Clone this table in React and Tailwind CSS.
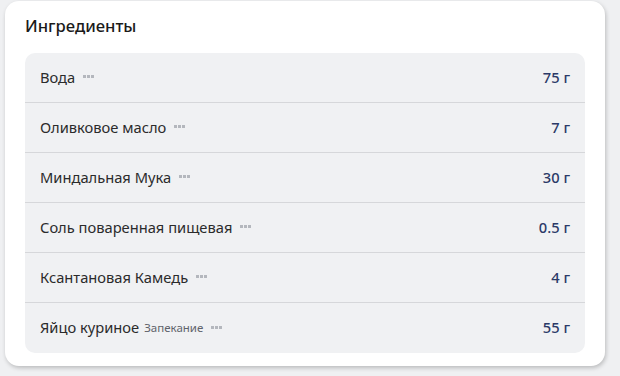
import React from "react";

const items = [
  { name: "Вода", value: "75 г" },
  { name: "Оливковое масло", value: "7 г" },
  { name: "Миндальная Мука", value: "30 г" },
  { name: "Соль поваренная пищевая", value: "0.5 г" },
  { name: "Ксантановая Камедь", value: "4 г" },
  { name: "Яйцо куриное", sub: "Запекание", value: "55 г" },
];

function Dots() {
  return (
    <span className="ml-[8px] inline-flex items-center gap-[1px]">
      <span className="w-[3px] h-[3px] bg-[#b4b7bd]" />
      <span className="w-[3px] h-[3px] bg-[#b4b7bd]" />
      <span className="w-[3px] h-[3px] bg-[#b4b7bd]" />
    </span>
  );
}

export default function App() {
  return (
    <div
      className="w-[620px] h-[376px] bg-[#eff0f2] pt-[1px] pl-[5px]"
      style={{ fontFamily: '"Noto Sans", "Open Sans", sans-serif' }}
    >
      <div className="w-[600px] h-[365px] bg-white rounded-[14px] shadow-[1px_2px_4px_rgba(0,0,0,0.22)] px-[20px] pt-[13px]">
        <h2 className="text-[16.6px] leading-[24px] font-medium text-[#1a1a1a] mb-[15px]">
          Ингредиенты
        </h2>
        <div className="bg-[#f0f1f3] rounded-[10px]">
          {items.map((it, i) => (
            <div
              key={i}
              className={
                "h-[50px] px-[15px] flex items-center justify-between " +
                (i < items.length - 1 ? "border-b border-[#d6d7da]" : "")
              }
            >
              <div className="flex items-center text-[14.7px] text-[#2b2b2b] -mt-[1px]">
                <span>{it.name}</span>
                {it.sub && (
                  <span className="ml-[5px] text-[11.5px] text-[#5f636b]">{it.sub}</span>
                )}
                <Dots />
              </div>
              <div className="text-[14.7px] font-medium text-[#2b3a67] -mt-[1px]">{it.value}</div>
            </div>
          ))}
        </div>
      </div>
    </div>
  );
}
